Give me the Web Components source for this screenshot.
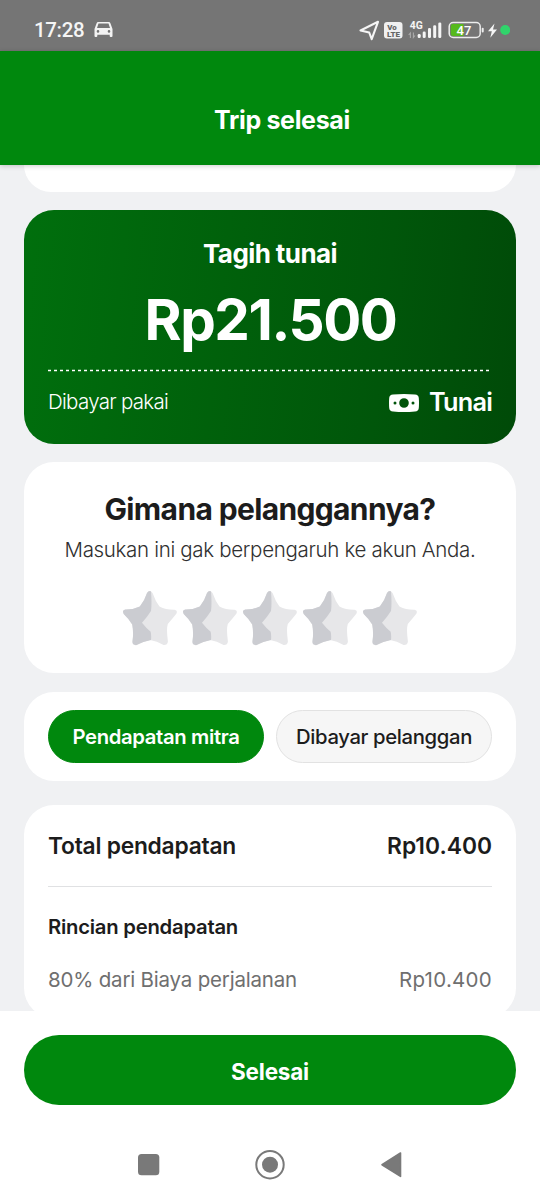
<!DOCTYPE html>
<html lang="id">
<head>
<meta charset="utf-8">
<title>Trip selesai</title>
<style>
html,body{margin:0;height:1200px;overflow:hidden;background:#fff}
body{font-family:Inter,"Liberation Sans",sans-serif;color:#1c1c1c}
</style>
</head>
<body>
<trip-app>
  <status-bar slot="status"></status-bar>
  <app-header slot="header"><fit-text size="25" weight="700" width="136">Trip selesai</fit-text></app-header>
  <ui-card class="peek" style="height:27px;--radius:0 0 30px 30px"></ui-card>
  <bill-card style="margin-top:18px">
    <fit-text slot="title" size="26" weight="700" width="134">Tagih tunai</fit-text>
    <fit-text slot="amount" size="56.5" weight="700" width="252">Rp21.500</fit-text>
    <fit-text slot="label" size="20.5" weight="300" width="120">Dibayar pakai</fit-text>
    <fit-text slot="method" size="25.3" weight="600" width="63">Tunai</fit-text>
  </bill-card>
  <ui-card style="margin-top:18px;height:211px">
    <rating-panel>
      <fit-text slot="title" size="30" weight="700" width="331">Gimana pelanggannya?</fit-text>
      <fit-text slot="note" size="20.5" weight="300" width="411" style="color:#303030">Masukan ini gak berpengaruh ke akun Anda.</fit-text>
    </rating-panel>
  </ui-card>
  <ui-card style="margin-top:19px;height:89px">
    <pill-tabs>
      <pill-tab active><fit-text size="20.3" weight="600" width="167">Pendapatan mitra</fit-text></pill-tab>
      <pill-tab><fit-text size="20.3" weight="500" width="176">Dibayar pelanggan</fit-text></pill-tab>
    </pill-tabs>
  </ui-card>
  <ui-card style="margin-top:24px;height:213px">
    <income-row style="height:81px" line>
      <fit-text size="22.8" weight="600" width="188">Total pendapatan</fit-text>
      <fit-text slot="value" size="22.8" weight="600" width="105">Rp10.400</fit-text>
    </income-row>
    <income-row style="height:80px">
      <fit-text size="20.3" weight="600" width="190">Rincian pendapatan</fit-text>
    </income-row>
    <income-row style="height:27px;color:#6f6f6f">
      <fit-text size="20.5" weight="400" width="249">80% dari Biaya perjalanan</fit-text>
      <fit-text slot="value" size="20.5" weight="400" width="93">Rp10.400</fit-text>
    </income-row>
  </ui-card>
  <primary-button slot="footer"><fit-text size="22.5" weight="700" width="78">Selesai</fit-text></primary-button>
  <nav-bar slot="footer"></nav-bar>
</trip-app>
<script>
const define = (name, html, init) => {
  const t = document.createElement('template');
  t.innerHTML = html;
  customElements.define(name, class extends HTMLElement {
    constructor() {
      super();
      this.attachShadow({mode: 'open'}).append(t.content.cloneNode(true));
    }
    connectedCallback() { if (init) init(this); }
  });
};

define('trip-app', `<style>
:host{display:flex;flex-direction:column;width:540px;height:1200px;overflow:hidden}
main{height:846px;flex:none;box-sizing:border-box;padding:0 24px;background:#f0f1f3;overflow:hidden}
footer{flex:1;background:#fff;padding-top:24px}
</style><slot name="status"></slot><slot name="header"></slot><main><slot></slot></main><footer><slot name="footer"></slot></footer>`);

define('status-bar', `<style>
:host{display:flex;height:51px;box-sizing:border-box;padding:8px 30px 0 34px;align-items:center;background:#757575;color:#f5f5f5;font-family:Roboto,sans-serif}
.time{font-size:20.5px;font-weight:500;width:50px;line-height:24px;letter-spacing:-.35px}
svg{display:block;flex:none}
.car{margin-left:10px}
.right{margin-left:auto}
</style>
<span class="time">17:28</span>
<svg class="car" width="19" height="17" viewBox="0 0 19 17"><path fill="#f3f3f3" fill-rule="evenodd" d="M4.2 1H14.8Q16 1 16.4 2.2L18.5 8V15Q18.5 16 17.5 16H16.6Q15.7 16 15.7 15V13.7H3.3V15Q3.3 16 2.4 16H1.5Q.5 16 .5 15V8L2.6 2.2Q3 1 4.2 1ZM4.5 2.5L3 7H16L14.5 2.5ZM4 9.1A1.3 1.3 0 1 0 4 11.7A1.3 1.3 0 1 0 4 9.1ZM15 9.1A1.3 1.3 0 1 0 15 11.7A1.3 1.3 0 1 0 15 9.1Z"/></svg>
<svg class="right" width="154" height="24" viewBox="356 17 154 24">
<path d="M360.5 29.5L378 20.8L371.7 38.2L369.2 31.5Z" fill="none" stroke="#f5f5f5" stroke-width="2.1" stroke-linejoin="round"/>
<rect x="384" y="21" width="18.5" height="16.5" rx="3" fill="#f0f0f0"/>
<text x="387.2" y="28.6" font-size="7.6" font-weight="900" fill="#666" textLength="9.5" lengthAdjust="spacingAndGlyphs">Vo</text>
<text x="387" y="35.6" font-size="8" font-weight="900" fill="#666" textLength="13" lengthAdjust="spacingAndGlyphs">LTE</text>
<text x="409.7" y="28" font-size="10.8" font-weight="700" fill="#f5f5f5" textLength="13" lengthAdjust="spacingAndGlyphs">4G</text>
<g stroke="#aaa" stroke-width="1.1" fill="none"><path d="M410.4 37V32L408.7 34M413.4 31.5V36.5L415 34.5"/></g>
<g fill="#f5f5f5"><rect x="417.7" y="33" width="3" height="4" rx="1.3"/><rect x="422.7" y="30.5" width="3" height="6.5" rx="1.3"/><rect x="428" y="27" width="3" height="10" rx="1.3"/><rect x="433.2" y="24.3" width="3" height="12.7" rx="1.3"/><rect x="438.3" y="21.5" width="3" height="15.5" rx="1.3"/></g>
<path d="M453 23H463.5V35H453Q450.8 35 450.8 33V25Q450.8 23 453 23Z" fill="#56b91d"/>
<rect x="449.2" y="21.6" width="31" height="14.8" rx="4" fill="none" stroke="#ececec" stroke-width="1.5"/>
<rect x="481.7" y="26.8" width="2" height="4.6" rx="1" fill="#ececec"/>
<text x="456.5" y="33.8" font-size="13.5" font-weight="500" fill="#fff" textLength="14.8" lengthAdjust="spacingAndGlyphs">47</text>
<path d="M494.5 22.5L488 30.3H491.8L490.3 36.8L497 28.4H493Z" fill="#f5f5f5"/>
<circle cx="505.2" cy="29" r="5" fill="#30d46b"/>
</svg>`);

define('app-header', `<style>
:host{display:flex;height:114px;flex:none;box-sizing:border-box;padding:24px 0 0 24px;align-items:center;justify-content:center;background:#00880d;color:#fff;position:relative;z-index:1;box-shadow:0 1px 5px rgba(0,0,0,.2)}
</style><slot></slot>`);

define('ui-card', `<style>
:host{display:block;box-sizing:border-box;padding:0 24px;background:#fff;border-radius:var(--radius,30px)}
</style><slot></slot>`);

define('bill-card', `<style>
:host{display:block;box-sizing:border-box;height:234px;padding:24px 24px 0;border-radius:30px;color:#fff;background:linear-gradient(96deg,#006f0d 0%,#00610b 40%,#00560a 72%,#004a08 100%)}
.c{display:flex;justify-content:center;align-items:center}
.title{height:40px}
.amount{height:92px;padding-left:1px}
.dash{display:block}
.foot{display:flex;align-items:center;height:57px}
.icon{margin-left:auto;margin-right:10px}
</style>
<div class="c title"><slot name="title"></slot></div>
<div class="c amount"><slot name="amount"></slot></div>
<svg class="dash" width="444" height="8"><path d="M0 4.5H441.5" stroke="#fff" stroke-width="1.3" stroke-dasharray="3 3"/></svg>
<div class="foot"><slot name="label"></slot>
<svg class="icon" width="30" height="18" viewBox="0 0 30 18"><path fill="#fff" fill-rule="evenodd" d="M4 .5Q15-.5 26 .5Q29.5.8 29.8 4Q30.2 9 29.8 14Q29.5 17.2 26 17.5Q15 18.5 4 17.5Q.5 17.2.2 14Q-.2 9 .2 4Q.5.8 4 .5ZM15 4.2A4.8 4.8 0 1 0 15 13.8A4.8 4.8 0 1 0 15 4.2ZM6 7.5A1.5 1.5 0 1 0 6 10.5A1.5 1.5 0 1 0 6 7.5ZM24 7.5A1.5 1.5 0 1 0 24 10.5A1.5 1.5 0 1 0 24 7.5Z"/></svg>
<slot name="method"></slot></div>`);

define('rating-star', `<style>:host{display:block;width:60px;height:60px}svg{display:block;filter:blur(.35px)}</style>
<svg width="60" height="60" viewBox="0 0 60 60">
<path d="M29.8 4Q31.8 4 32.8 6.5Q35.5 14.5 39.5 19.5Q46 23 54.5 22.8Q57.8 23.2 56.5 26.5Q53 31 47.8 37Q46.2 42 47.9 54.5Q47.6 58.2 43.6 58Q37 54 30 53Q23 54.5 16 58.2Q12 58 12.5 54Q13.8 46 12.2 37.5Q9 32 3.7 27Q1.7 23 5.3 22.6Q13 22.8 19.8 19.5Q24.5 14 27 6Q28 4 29.8 4Z" fill="#e7e7e9"/>
<path d="M30 4Q28 4 27 6Q24.5 14 19.8 19.5Q13 22.8 5.3 22.6Q1.7 23 3.7 27Q9 32 12.2 37.5Q13.8 46 12.5 54Q12 58 16 58.2Q23 54.5 31 53Q31.5 49 30.7 44.8Q26 41 22 35.8Q26.5 31 31 24Q32 16 31 4.5Z" fill="#cbccd1"/>
</svg>`);

define('rating-panel', `<style>
:host{display:flex;flex-direction:column;align-items:center;padding-top:27px;margin:0 -10px}
div{display:flex;align-items:center}
.t{height:40px}.n{height:42px}
.s{margin-top:16px}
</style><div class="t"><slot name="title"></slot></div><div class="n"><slot name="note"></slot></div>
<div class="s"><rating-star></rating-star><rating-star></rating-star><rating-star></rating-star><rating-star></rating-star><rating-star></rating-star></div>`);

define('pill-tabs', `<style>:host{display:grid;grid-template-columns:1fr 1fr;gap:12px;padding-top:18px}</style><slot></slot>`);

define('pill-tab', `<style>
:host{display:flex;align-items:center;justify-content:center;box-sizing:border-box;height:53px;padding-top:2px;border-radius:27px;border:1px solid #e2e2e2;background:#f6f6f6}
:host([active]){background:#00880d;border-color:#00880d;color:#fff}
</style><slot></slot>`);

define('income-row', `<style>
:host{display:flex;align-items:center;justify-content:space-between}
:host([line]){border-bottom:1px solid #e0e1e3}
</style><slot></slot><slot name="value"></slot>`);

define('primary-button', `<style>
:host{display:flex;align-items:center;justify-content:center;height:70px;margin:0 24px;padding-top:2px;box-sizing:border-box;border-radius:35px;background:#00880d;color:#fff}
</style><slot></slot>`);

define('nav-bar', `<style>:host{display:block;margin-top:35px}svg{display:block}</style>
<svg width="540" height="50" viewBox="0 1140 540 50" fill="#797979">
<rect x="138" y="1154" width="21.3" height="21.3" rx="3.5"/>
<circle cx="270" cy="1164.7" r="13.7" fill="none" stroke="#797979" stroke-width="2"/><circle cx="270" cy="1164.7" r="8"/>
<path d="M382 1164.7L400.5 1153V1176.4Z" stroke="#797979" stroke-width="1.6" stroke-linejoin="round"/>
</svg>`);

/* Single-line text whose tracking is set so that it fills the given width. */
define('fit-text', `<style>:host{display:block;flex:none;line-height:1.2;white-space:nowrap}span{display:inline-block}</style><span><slot></slot></span>`, el => {
  const span = el.shadowRoot.querySelector('span');
  el.style.fontSize = el.getAttribute('size') + 'px';
  el.style.fontWeight = el.getAttribute('weight');
  const target = +el.getAttribute('width');
  const natural = span.getBoundingClientRect().width;
  span.style.letterSpacing = (target - natural) / el.textContent.length + 'px';
});
</script>
</body>
</html>
